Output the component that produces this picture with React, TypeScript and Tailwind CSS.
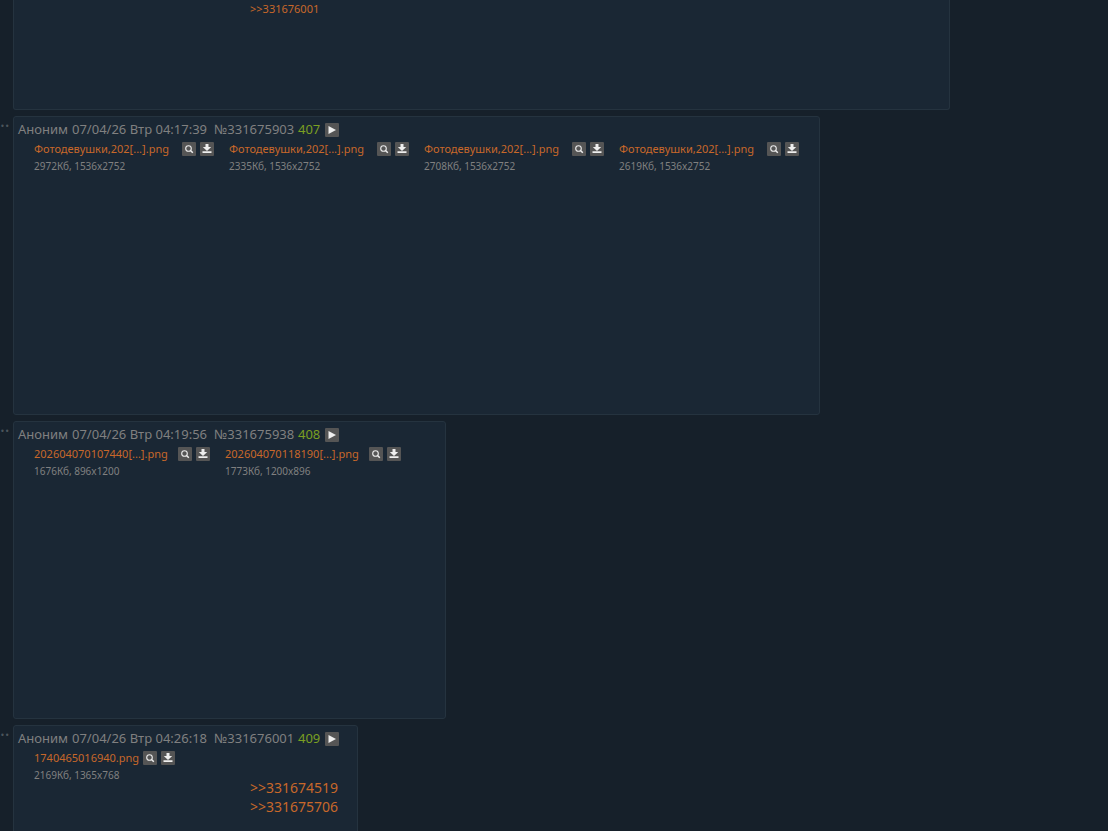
import React from "react";

type FileItem = { name: string; meta: string };
type PostData = {
  id: string;
  num: number;
  date: string;
  files: FileItem[];
  size: string;
  step: string;
  nameWidth: string;
  replies?: string[];
};

const photo = (kb: number): FileItem => ({ name: "Фотодевушки,202[...].png", meta: `${kb}Кб, 1536x2752` });

const posts: PostData[] = [
  {
    id: "331675903",
    num: 407,
    date: "07/04/26 Втр 04:17:39",
    files: [photo(2972), photo(2335), photo(2708), photo(2619)],
    size: "w-[807px] min-h-[299px]",
    step: "w-[195px]",
    nameWidth: "min-w-[144px]",
  },
  {
    id: "331675938",
    num: 408,
    date: "07/04/26 Втр 04:19:56",
    files: [
      { name: "202604070107440[...].png", meta: "1676Кб, 896x1200" },
      { name: "202604070118190[...].png", meta: "1773Кб, 1200x896" },
    ],
    size: "w-[433px] min-h-[298px]",
    step: "w-[191px]",
    nameWidth: "min-w-[140px]",
  },
  {
    id: "331676001",
    num: 409,
    date: "07/04/26 Втр 04:26:18",
    files: [{ name: "1740465016940.png", meta: "2169Кб, 1365x768" }],
    size: "w-[345px] min-h-[298px]",
    step: "w-[216px]",
    nameWidth: "min-w-[105px]",
    replies: ["331674519", "331675706"],
  },
];

const iconButton = "block h-[14px] w-[14px] shrink-0 rounded-[1px] bg-[#555555] text-[#eeeeee]";

function PlayButton() {
  return (
    <button type="button" aria-label="Меню поста" className={iconButton}>
      <svg viewBox="0 0 14 14" className="h-full w-full" fill="currentColor">
        <path d="M3.5 3v8l7.5-4z" />
      </svg>
    </button>
  );
}

function SearchButton() {
  return (
    <button type="button" aria-label="Найти изображение" className={iconButton}>
      <svg viewBox="0 0 14 14" className="h-full w-full" fill="none" stroke="currentColor">
        <circle cx="6.5" cy="6.5" r="2.8" strokeWidth="1.1" />
        <path d="M8.5 8.5 10.8 10.8" strokeWidth="1.5" />
      </svg>
    </button>
  );
}

function DownloadButton() {
  return (
    <button type="button" aria-label="Скачать" className={iconButton}>
      <svg viewBox="0 0 14 14" className="h-full w-full" fill="currentColor">
        <path d="M5.5 2h3v3H11.2L7 9 2.8 5h2.7zM2.5 9.3h9V11h-9z" />
      </svg>
    </button>
  );
}

function FileCard({ file, step, nameWidth }: { file: FileItem; step: string; nameWidth: string }) {
  return (
    <figure className={`${step} shrink-0`}>
      <div className="flex h-[18px] items-center gap-1">
        <a href="#file" className={`${nameWidth} whitespace-nowrap text-[11px] leading-4 text-[#c8682a]`}>
          {file.name}
        </a>
        <SearchButton />
        <DownloadButton />
      </div>
      <figcaption className="text-[10px] leading-4 text-[#808080]">{file.meta}</figcaption>
    </figure>
  );
}

function Post({ post }: { post: PostData }) {
  return (
    <div className="flex shrink-0">
      <span className="w-[13px] shrink-0 text-[18px] leading-2 text-[#4c555c]">..</span>
      <article className={`${post.size} rounded-[3px] border border-[#25333f] bg-[#1a2734] px-1 pt-1`}>
        <header className="flex h-[18px] items-center whitespace-nowrap text-[13px] text-[#808080]">
          <span className="w-[54px]">Аноним</span>
          <time className="w-[142px]">{post.date}</time>
          <a href={`#${post.id}`} className="w-[84px]">№{post.id}</a>
          <span className="w-[27px] text-[#7b9f22]">{post.num}</span>
          <PlayButton />
        </header>
        <div className="flex pl-4 pt-[1px]">
          {post.files.map((file, i) => (
            <FileCard key={i} file={file} step={post.step} nameWidth={post.nameWidth} />
          ))}
          {post.replies && (
            <div className="flex flex-col pt-[29px] text-[14px] leading-[19px] text-[#c8682a]">
              {post.replies.map((r) => (
                <a key={r} href={`#${r}`}>&gt;&gt;{r}</a>
              ))}
            </div>
          )}
        </div>
      </article>
    </div>
  );
}

export default function App() {
  return (
    <main className="flex h-screen flex-col gap-[6px] overflow-hidden bg-[#16202a] font-['Noto_Sans',sans-serif]">
      <div className="shrink-0 pl-[13px]">
        <article className="flex min-h-[110px] w-[937px] items-start rounded-b-[3px] border border-t-0 border-[#25333f] bg-[#1a2734] pl-[236px]">
          <a href="#331676001" className="text-[11px] leading-[18px] text-[#c8682a]">&gt;&gt;331676001</a>
        </article>
      </div>
      {posts.map((post) => (
        <Post key={post.id} post={post} />
      ))}
    </main>
  );
}
